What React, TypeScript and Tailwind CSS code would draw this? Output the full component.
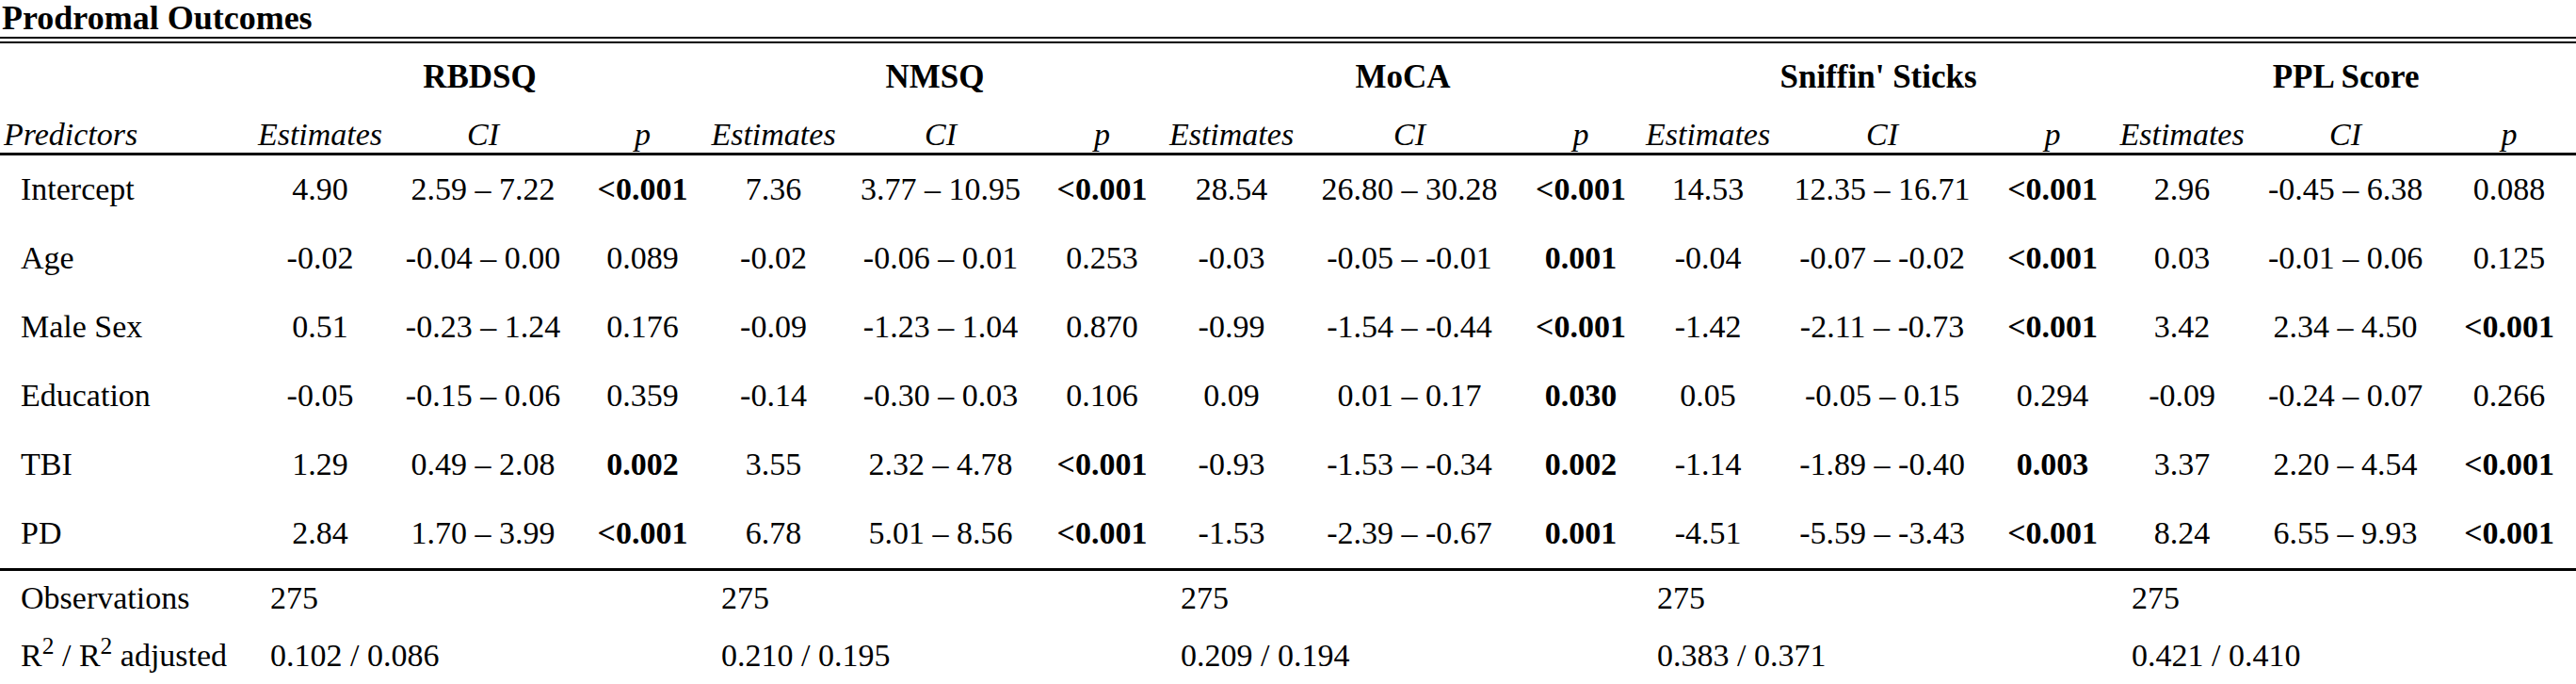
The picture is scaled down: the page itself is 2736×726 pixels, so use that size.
const OUTCOMES = ['RBDSQ', 'NMSQ', 'MoCA', "Sniffin' Sticks", 'PPL Score'];

// measured column widths: predictors, then est / ci / p per outcome
const COLS = [
  'w-[270px]',
  'w-[140px]', 'w-[206px]', 'w-[133px]',
  'w-[145px]', 'w-[210px]', 'w-[133px]',
  'w-[142px]', 'w-[236px]', 'w-[128px]',
  'w-[142px]', 'w-[228px]', 'w-[134px]',
  'w-[141px]', 'w-[206px]', 'w-[142px]',
];

type Cell = [string, string, string];

const ROWS: { label: string; cells: Cell[] }[] = [
  {
    label: 'Intercept',
    cells: [
      ['4.90', '2.59 – 7.22', '<0.001'],
      ['7.36', '3.77 – 10.95', '<0.001'],
      ['28.54', '26.80 – 30.28', '<0.001'],
      ['14.53', '12.35 – 16.71', '<0.001'],
      ['2.96', '-0.45 – 6.38', '0.088'],
    ],
  },
  {
    label: 'Age',
    cells: [
      ['-0.02', '-0.04 – 0.00', '0.089'],
      ['-0.02', '-0.06 – 0.01', '0.253'],
      ['-0.03', '-0.05 – -0.01', '0.001'],
      ['-0.04', '-0.07 – -0.02', '<0.001'],
      ['0.03', '-0.01 – 0.06', '0.125'],
    ],
  },
  {
    label: 'Male Sex',
    cells: [
      ['0.51', '-0.23 – 1.24', '0.176'],
      ['-0.09', '-1.23 – 1.04', '0.870'],
      ['-0.99', '-1.54 – -0.44', '<0.001'],
      ['-1.42', '-2.11 – -0.73', '<0.001'],
      ['3.42', '2.34 – 4.50', '<0.001'],
    ],
  },
  {
    label: 'Education',
    cells: [
      ['-0.05', '-0.15 – 0.06', '0.359'],
      ['-0.14', '-0.30 – 0.03', '0.106'],
      ['0.09', '0.01 – 0.17', '0.030'],
      ['0.05', '-0.05 – 0.15', '0.294'],
      ['-0.09', '-0.24 – 0.07', '0.266'],
    ],
  },
  {
    label: 'TBI',
    cells: [
      ['1.29', '0.49 – 2.08', '0.002'],
      ['3.55', '2.32 – 4.78', '<0.001'],
      ['-0.93', '-1.53 – -0.34', '0.002'],
      ['-1.14', '-1.89 – -0.40', '0.003'],
      ['3.37', '2.20 – 4.54', '<0.001'],
    ],
  },
  {
    label: 'PD',
    cells: [
      ['2.84', '1.70 – 3.99', '<0.001'],
      ['6.78', '5.01 – 8.56', '<0.001'],
      ['-1.53', '-2.39 – -0.67', '0.001'],
      ['-4.51', '-5.59 – -3.43', '<0.001'],
      ['8.24', '6.55 – 9.93', '<0.001'],
    ],
  },
];

const R2 = ['0.102 / 0.086', '0.210 / 0.195', '0.209 / 0.194', '0.383 / 0.371', '0.421 / 0.410'];

const isSig = (p: string) => p.startsWith('<') || parseFloat(p) < 0.05;

export default function App() {
  return (
    <div className="w-[2736px] bg-white text-black font-['Liberation_Serif','Times_New_Roman',serif]">
      <div className="pl-[2px] h-[39px] text-[36px] leading-[39px] font-bold">Prodromal Outcomes</div>
      <table className="table-fixed w-full border-collapse border-t-[7px] border-double border-black text-[34px]">
        <colgroup>
          {COLS.map((c, i) => (
            <col key={i} className={c} />
          ))}
        </colgroup>
        <thead>
          <tr>
            <th className="pt-[16px] pb-[10px] leading-[40px]" />
            {OUTCOMES.map(o => (
              <th key={o} colSpan={3} className="pt-[16px] pb-[10px] leading-[40px] text-[35px] font-bold text-center">
                {o}
              </th>
            ))}
          </tr>
          <tr className="border-b-[3px] border-black">
            <th className="pl-[4px] pt-[11px] leading-[39px] italic font-normal text-left">Predictors</th>
            {OUTCOMES.map(o => [
              <th key={o + 'e'} className="pt-[11px] leading-[39px] italic font-normal text-center">Estimates</th>,
              <th key={o + 'c'} className="pt-[11px] leading-[39px] italic font-normal text-center">CI</th>,
              <th key={o + 'p'} className="pt-[11px] leading-[39px] italic font-normal text-center">p</th>,
            ])}
          </tr>
        </thead>
        <tbody>
          {ROWS.map((r, ri) => (
            <tr key={r.label} className={ri === ROWS.length - 1 ? 'border-b-[3px] border-black' : ''}>
              <td className="pl-[22px] pt-[16px] pb-[17px] leading-[40px] whitespace-nowrap">{r.label}</td>
              {r.cells.map((c, ci) => [
                <td key={ci + 'e'} className="pt-[16px] pb-[17px] leading-[40px] text-center whitespace-nowrap">{c[0]}</td>,
                <td key={ci + 'c'} className="pt-[16px] pb-[17px] leading-[40px] text-center whitespace-nowrap">{c[1]}</td>,
                <td
                  key={ci + 'p'}
                  className={`pt-[16px] pb-[17px] leading-[40px] text-center whitespace-nowrap ${isSig(c[2]) ? 'font-bold' : ''}`}
                >
                  {c[2]}
                </td>,
              ])}
            </tr>
          ))}
          <tr>
            <td className="pl-[22px] pt-[9px] pb-[12px] leading-[40px] whitespace-nowrap">Observations</td>
            {OUTCOMES.map(o => (
              <td key={o} colSpan={3} className="pl-[17px] pt-[9px] pb-[12px] leading-[40px] text-left">
                275
              </td>
            ))}
          </tr>
          <tr>
            <td className="pl-[22px] pt-[9px] pb-[12px] leading-[40px] whitespace-nowrap">
              R<sup>2</sup> / R<sup>2</sup> adjusted
            </td>
            {R2.map((v, i) => (
              <td key={i} colSpan={3} className="pl-[17px] pt-[9px] pb-[12px] leading-[40px] text-left">
                {v}
              </td>
            ))}
          </tr>
        </tbody>
      </table>
    </div>
  );
}
